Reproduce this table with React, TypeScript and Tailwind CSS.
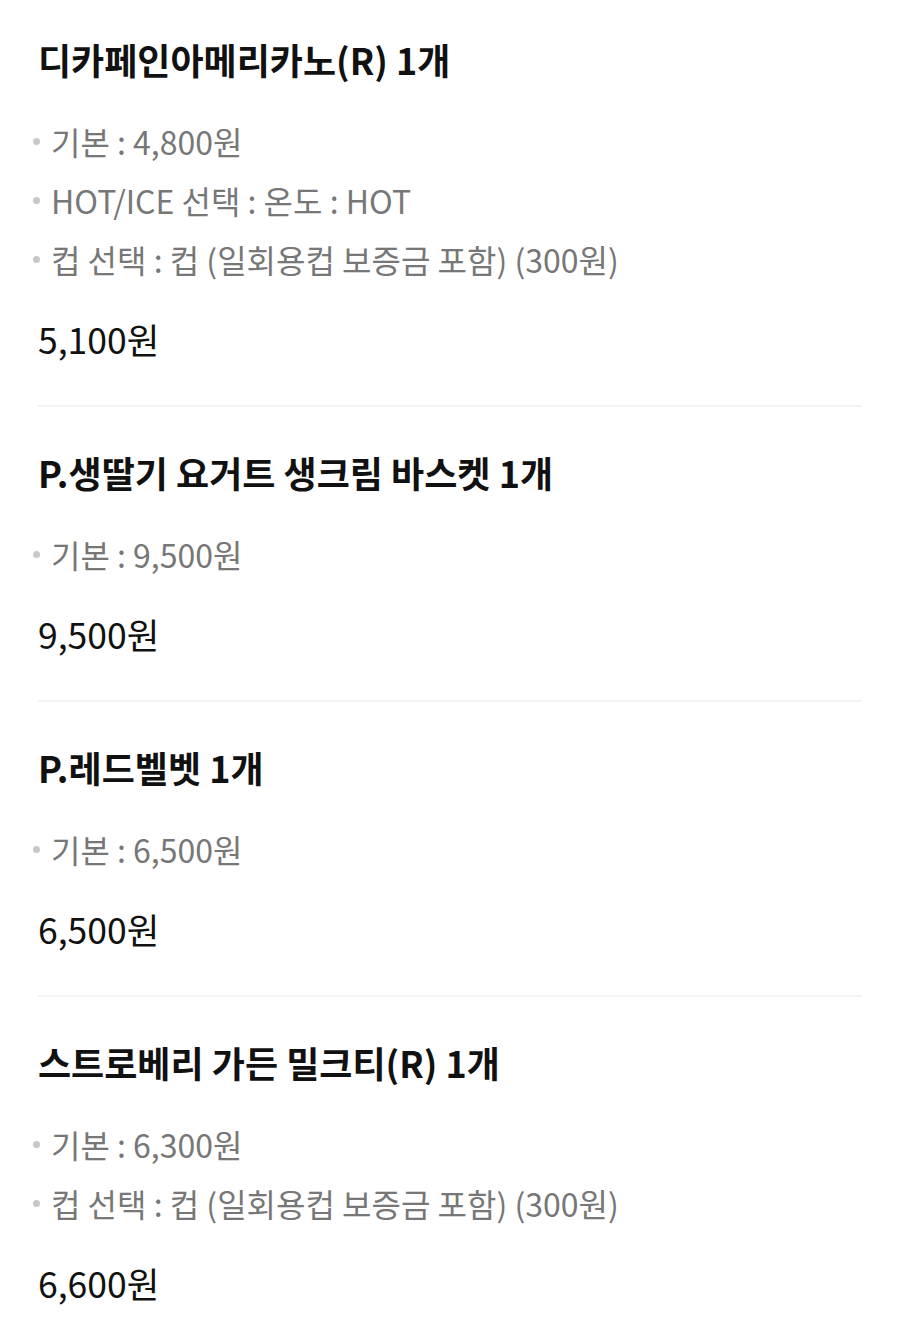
const items = [
  {
    name: '디카페인아메리카노(R) 1개',
    options: ['기본 : 4,800원', 'HOT/ICE 선택 : 온도 : HOT', '컵 선택 : 컵 (일회용컵 보증금 포함) (300원)'],
    price: '5,100원',
  },
  {
    name: 'P.생딸기 요거트 생크림 바스켓 1개',
    options: ['기본 : 9,500원'],
    price: '9,500원',
  },
  {
    name: 'P.레드벨벳 1개',
    options: ['기본 : 6,500원'],
    price: '6,500원',
  },
  {
    name: '스트로베리 가든 밀크티(R) 1개',
    options: ['기본 : 6,300원', '컵 선택 : 컵 (일회용컵 보증금 포함) (300원)'],
    price: '6,600원',
  },
];

export default function App() {
  return (
    <div
      className="min-h-screen bg-white px-[38px]"
      style={{ fontFamily: '"Noto Sans CJK KR", "Noto Sans", sans-serif' }}
    >
      {items.map((item, i) => (
        <div
          key={i}
          className={`${i === 0 ? 'pt-[38px]' : 'pt-[44px]'} pb-[46px] ${
            i < items.length - 1 ? 'border-b-2 border-[#f3f3f3]' : ''
          }`}
        >
          <h2 className="text-[36px] leading-[42px] font-bold text-[#111]">{item.name}</h2>
          <ul className="mt-[32px]">
            {item.options.map((opt, j) => (
              <li key={j} className="-ml-[5px] flex items-center text-[32px] leading-[59px] text-[#777]">
                <span className="mr-[11px] h-[7px] w-[7px] shrink-0 rounded-full bg-[#c8c8c8]" />
                {opt}
              </li>
            ))}
          </ul>
          <p className="mt-[30px] text-[35.5px] leading-[40px] text-[#111]">{item.price}</p>
        </div>
      ))}
    </div>
  );
}
